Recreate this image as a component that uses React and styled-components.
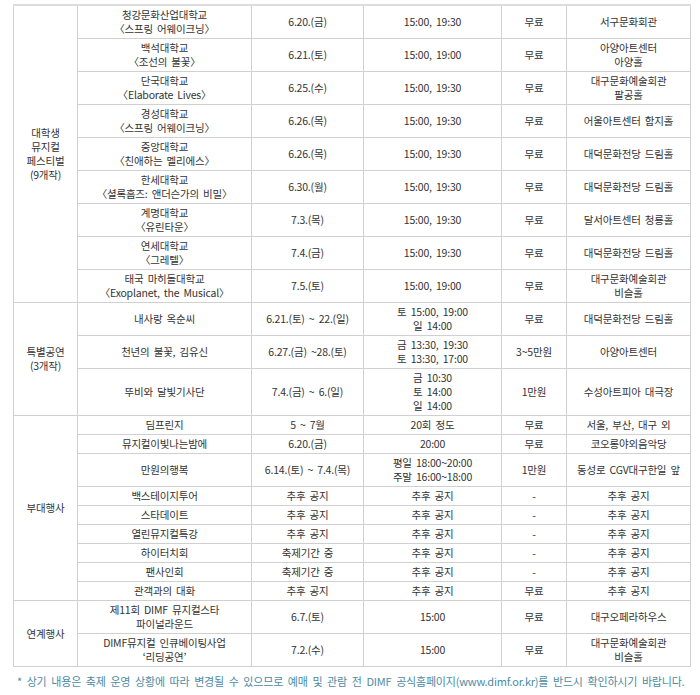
import React from "react";
import styled, { createGlobalStyle } from "styled-components";

const GlobalStyle = createGlobalStyle`
  html, body {
    margin: 0;
    padding: 0;
    background: #fff;
  }
  body {
    font-family: "Noto Sans CJK KR", "Noto Sans", sans-serif;
  }
`;

const Page = styled.div`
  width: 700px;
  padding: 4px 0 0 13px;
  box-sizing: border-box;
`;

const Table = styled.table`
  width: 677px;
  table-layout: fixed;
  border-collapse: collapse;
  border: 1px solid #cfcfcf;
  border-top: 2px solid #dcdcdc;
  color: #333;
  font-size: 10.5px;
  line-height: 14px;
  letter-spacing: -0.2px;
  word-spacing: 2px;
`;

const Col = styled.col`
  width: ${(p) => p.$w}px;
`;

const Cell = styled.td`
  border: 1px solid #d0d0d0;
  padding: 2px 2px;
  text-align: center;
  vertical-align: middle;
  white-space: nowrap;
`;

const Category = styled(Cell)`
  white-space: normal;
  word-spacing: 0;
`;

const Footnote = styled.p`
  margin: 6px 0 0 4px;
  color: #4d8aa3;
  font-size: 11px;
  letter-spacing: -0.2px;
  word-spacing: 2.5px;
  white-space: nowrap;
`;

const Lines = ({ text }) =>
  text.split("/").map((line, i, all) => (
    <React.Fragment key={i}>
      {line}
      {i < all.length - 1 && <br />}
    </React.Fragment>
  ));

const widths = [64, 174, 112, 138, 65, 124];

const groups = [
  {
    name: "대학생/뮤지컬/페스티벌/(9개작)",
    rows: [
      ["청강문화산업대학교/〈스프링 어웨이크닝〉", "6.20.(금)", "15:00, 19:30", "무료", "서구문화회관"],
      ["백석대학교/〈조선의 불꽃〉", "6.21.(토)", "15:00, 19:00", "무료", "아양아트센터/아양홀"],
      ["단국대학교/〈Elaborate Lives〉", "6.25.(수)", "15:00, 19:30", "무료", "대구문화예술회관/팔공홀"],
      ["경성대학교/〈스프링 어웨이크닝〉", "6.26.(목)", "15:00, 19:30", "무료", "어울아트센터 함지홀"],
      ["중앙대학교/〈친애하는 멜리에스〉", "6.26.(목)", "15:00, 19:30", "무료", "대덕문화전당 드림홀"],
      ["한세대학교/〈셜록홈즈: 앤더슨가의 비밀〉", "6.30.(월)", "15:00, 19:30", "무료", "대덕문화전당 드림홀"],
      ["계명대학교/〈유린타운〉", "7.3.(목)", "15:00, 19:30", "무료", "달서아트센터 청룡홀"],
      ["연세대학교/〈그레텔〉", "7.4.(금)", "15:00, 19:30", "무료", "대덕문화전당 드림홀"],
      ["태국 마히돌대학교/〈Exoplanet, the Musical〉", "7.5.(토)", "15:00, 19:00", "무료", "대구문화예술회관/비슬홀"],
    ],
  },
  {
    name: "특별공연/(3개작)",
    rows: [
      ["내사랑 옥순씨", "6.21.(토) ~ 22.(일)", "토 15:00, 19:00/일 14:00", "무료", "대덕문화전당 드림홀"],
      ["천년의 불꽃, 김유신", "6.27.(금) ~28.(토)", "금 13:30, 19:30/토 13:30, 17:00", "3~5만원", "아양아트센터"],
      ["뚜비와 달빛기사단", "7.4.(금) ~ 6.(일)", "금 10:30/토 14:00/일 14:00", "1만원", "수성아트피아 대극장"],
    ],
  },
  {
    name: "부대행사",
    rows: [
      ["딤프린지", "5 ~ 7월", "20회 정도", "무료", "서울, 부산, 대구 외"],
      ["뮤지컬이빛나는밤에", "6.20.(금)", "20:00", "무료", "코오롱야외음악당"],
      ["만원의행복", "6.14.(토) ~ 7.4.(목)", "평일 18:00~20:00/주말 16:00~18:00", "1만원", "동성로 CGV대구한일 앞"],
      ["백스테이지투어", "추후 공지", "추후 공지", "-", "추후 공지"],
      ["스타데이트", "추후 공지", "추후 공지", "-", "추후 공지"],
      ["열린뮤지컬특강", "추후 공지", "추후 공지", "-", "추후 공지"],
      ["하이터치회", "축제기간 중", "추후 공지", "-", "추후 공지"],
      ["팬사인회", "축제기간 중", "추후 공지", "-", "추후 공지"],
      ["관객과의 대화", "추후 공지", "추후 공지", "무료", "추후 공지"],
    ],
  },
  {
    name: "연계행사",
    rows: [
      ["제11회 DIMF 뮤지컬스타/파이널라운드", "6.7.(토)", "15:00", "무료", "대구오페라하우스"],
      ["DIMF뮤지컬 인큐베이팅사업/‘리딩공연’", "7.2.(수)", "15:00", "무료", "대구문화예술회관/비슬홀"],
    ],
  },
];

export default function App() {
  return (
    <Page>
      <GlobalStyle />
      <Table>
        <colgroup>
          {widths.map((w, i) => (
            <Col key={i} $w={w} />
          ))}
        </colgroup>
        <tbody>
          {groups.map((g) =>
            g.rows.map((row, i) => (
              <tr key={g.name + i}>
                {i === 0 && (
                  <Category rowSpan={g.rows.length}>
                    <Lines text={g.name} />
                  </Category>
                )}
                {row.map((c, j) => (
                  <Cell key={j}>
                    <Lines text={c} />
                  </Cell>
                ))}
              </tr>
            ))
          )}
        </tbody>
      </Table>
      <Footnote>
        * 상기 내용은 축제 운영 상황에 따라 변경될 수 있으므로 예매 및 관람 전 DIMF 공식홈페이지(www.dimf.or.kr)를 반드시 확인하시기 바랍니다.
      </Footnote>
    </Page>
  );
}
